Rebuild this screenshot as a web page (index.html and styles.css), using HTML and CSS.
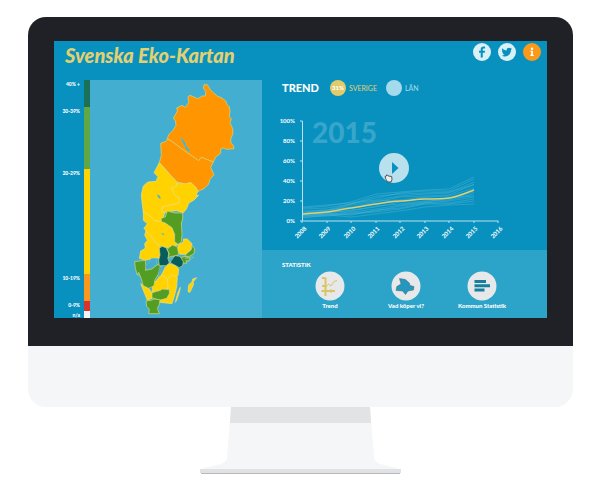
FILE: index.html
```
<!DOCTYPE html>
<html lang="sv">
<head>
<meta charset="utf-8">
<title>Svenska Eko-Kartan</title>
<link rel="stylesheet" href="styles.css">
</head>
<body>
<div class="computer">
  <div class="monitor">
    <main class="screen">
      <header class="topbar">
        <h1 class="brand">Svenska Eko-Kartan</h1>
        <nav class="social">
          <a class="social-link" href="#" aria-label="Facebook"><svg viewBox="0 0 18 18"><path d="M9.8 14.5V9.8h2l.3-2H9.8V6.6c0-.7.3-1 1-1h1.3V3.7c-2.8-.4-4.4.5-4.4 2.6v1.5H6v2h1.7v4.7z"/></svg></a>
          <a class="social-link" href="#" aria-label="Twitter"><svg viewBox="0 0 18 18"><path d="M14 5.8l-1 1.1c0 4-3.2 6.8-6.5 6.5-1 0-2-.3-2.700-.9 1.100.1 2-.2 2.800-.8-.9 0-1.700-.6-2-1.400h.9C4.500 10 4 9 3.900 8.100l.9.2C3.900 7.500 3.700 6.300 4.200 5.300c1.200 1.400 2.600 2.100 4.500 2.200C8.300 5.900 9.500 4.700 10.900 4.700c.6 0 1.100.2 1.500.6l1.300-.5-.7 1.100z"/></svg></a>
          <a class="social-link info" href="#" aria-label="Info"><svg viewBox="0 0 18 18"><circle cx="9" cy="5.700" r="1.200"/><path d="M7.500 7.700h2.400v4h.8v1.200H7.400v-1.200h.7V8.900h-.6z"/></svg></a>
        </nav>
      </header>

      <ul class="scale">
        <li class="step dark"><span>40% +</span></li>
        <li class="step green"><span>30-39%</span></li>
        <li class="step yellow"><span>20-29%</span></li>
        <li class="step orange"><span>10-19%</span></li>
        <li class="step red"><span>0-9%</span></li>
        <li class="step white"><span>n/a</span></li>
      </ul>

      <section class="map" aria-label="Karta">
        <svg viewBox="-120 6 516 714">
          <g class="o">
            <path d="M222 20L232 20 240 34 250 44 262 54 276 60 288 70 291 80 298 86 300 100 298 116 304 122 300 134 308 152 309 166 302 184 303 196 310 202 312 212 290 214 280 210 272 214 272 226 258 236 250 252 214 238 206 248 186 234 166 220 144 204 128 192 112 182 116 170 128 158 138 142 136 128 130 120 142 100 140 90 156 82 166 88 176 74 174 56 180 52 204 62 216 54 226 54 227 40 220 30Z"/>
            <path d="M112 182L128 192 144 204 166 220 206 248 214 238 250 252 242 268 252 290 240 304 236 318 222 332 204 340 196 326 182 314 166 318 142 312 120 290 104 270 88 254 94 232 92 196 108 190Z"/>
          </g>
          <g class="y">
            <path d="M88 254L120 290 142 314 140 324 124 330 134 350 150 362 146 376 98 386 94 400 104 404 100 420 94 434 74 428 60 414 40 404 36 372 34 350 40 324 54 312 78 310 84 296 72 284Z"/>
            <path d="M142 314L166 318 182 314 196 326 204 340 198 352 206 352 192 366 176 376 170 392 160 404 140 398 120 400 104 404 94 400 98 386 146 376 150 362 134 350 124 330 140 324Z"/>
            <path d="M40 401L60 414 74 428 94 431 106 435 126 449 134 471 134 491 144 501 122 505 114 509 98 505 88 503 76 493 62 473 48 459 42 451 52 437 40 427Z"/>
            <path d="M48 459L62 473 76 493 90 505 88 541 76 539 62 543 46 547 28 541 32 519 46 511 44 497 52 487 44 471Z"/>
            <path d="M146 499L160 493 160 483 172 483 186 497 182 515 168 529 150 529 142 515Z"/>
            <path d="M118 557L136 563 146 573 144 593 136 597 126 591 112 603 94 591 106 567Z"/>
            <path d="M94 591L112 603 116 613 114 633 92 637 74 641 66 643 68 621 84 601Z"/>
            <path d="M112 603L126 591 142 597 140 627 134 651 126 677 88 673 92 663 112 661 120 639 114 631Z"/>
            <path d="M32 617L40 623 56 631 66 645 66 661 52 667 44 647Z"/>
            <path d="M200 599L188 603 186 611 176 621 174 641 180 643 190 621 190 611Z"/>
            <path d="M151 628L143 645 136 673 140 667 148 643Z"/>
          </g>
          <g class="g">
            <path d="M112 399L134 405 158 405 158 423 154 435 156 469 154 491 144 499 134 491 134 469 126 449 106 435 94 431 94 421 106 417Z"/>
            <path d="M116 509L128 501 142 507 146 529 138 533 124 535 114 539 118 527 112 515Z"/>
            <path d="M186 503L194 513 192 527 178 535 164 535 170 527 184 515Z"/>
            <path d="M152 538L164 536 180 540 176 550 168 548 170 556 160 555 154 548Z"/>
            <path d="M14 551L30 549 46 547 48 567 46 577 66 573 84 559 92 567 86 587 74 607 72 623 56 631 40 623 32 597 26 583 22 591 16 571Z"/>
            <path d="M66 645L76 641 92 637 96 633 118 635 118 647 110 661 88 667 66 659Z"/>
            <path d="M48 669L64 667 72 663 90 665 88 679 82 691 88 707 56 707 58 693 50 685Z"/>
          </g>
          <g class="d">
            <path d="M96 505L108 509 116 525 114 541 118 555 108 563 88 563 86 547 90 531 88 511Z"/>
            <path d="M122 545L136 533 150 535 160 551 158 563 148 569 134 561 122 555Z"/>
          </g>
          <path class="lake" d="M64 541L78 541 80 557 66 571 50 575 46 563 56 555Z M88 569L96 565 90 589 84 597Z M112 541L130 541 122 551Z M93 466L103 467 100 472Z M150 179L158 184 166 194 170 206 180 218 178 223 168 214 162 200Z M80 349L90 354 92 363 86 360Z"/>
          <path class="isle" d="M166 542l18-5M172 548l12-4M184 537l8 2M24 585l4 12"/>
        </svg>
      </section>

      <section class="trend">
        <div class="trend-head">
          <h2 class="trend-title">TREND</h2>
          <span class="key sweden"><b class="dot">31%</b>SVERIGE</span>
          <span class="key county"><b class="dot"></b>LÄN</span>
        </div>
        <div class="chart">
          <svg viewBox="262 96 285 154">
            <text class="year" x="312" y="143">2015</text>
            <g class="counties">
              <path d="M303 208L327 206 351 202 376 194 400 192 425 190 449 189 474 177"/>
              <path d="M303 209L327 208 351 204 376 198 400 193 425 191 449 191 474 179"/>
              <path d="M303 207L327 205 351 203 376 200 400 196 425 194 449 193 474 182"/>
              <path d="M303 211L327 210 351 204 376 196 400 194 425 193 449 192 474 185"/>
              <path d="M303 212L327 210 351 207 376 202 400 197 425 196 449 195 474 184"/>
              <path d="M303 213L327 211 351 205 376 201 400 200 425 197 449 196 474 188"/>
              <path d="M303 214L327 213 351 210 376 207 400 202 425 198 449 199 474 192"/>
              <path d="M303 215L327 212 351 211 376 206 400 204 425 201 449 200 474 194"/>
              <path d="M303 215L327 214 351 212 376 209 400 205 425 202 449 198 474 196"/>
              <path d="M303 216L327 215 351 213 376 211 400 206 425 203 449 201 474 197"/>
              <path d="M303 216L327 214 351 215 376 210 400 208 425 203 449 203 474 199"/>
              <path d="M303 217L327 216 351 214 376 212 400 209 425 204 449 204 474 201"/>
              <path d="M303 218L327 215 351 217 376 214 400 211 425 207 449 205 474 204"/>
            </g>
            <path class="national" d="M303 214C311 213 319 213 327 212S343 209 351 208 368 205 376 204 392 201 400 201 417 199 425 199 441 199 449 198 466 193 474 190"/>
            <path class="axis" d="M300 121H302.500V221H498.500M300 141H302M300 161H302M300 181H302M300 201H302M300 221H302V223M327 221V223M351 221V223M376 221V223M400 221V223M425 221V223M449 221V223M474 221V223M498 221V223"/>
            <g class="labels">
              <text x="295" y="123">100%</text><text x="295" y="143">80%</text><text x="295" y="163">60%</text><text x="295" y="183">40%</text><text x="295" y="203">20%</text><text x="295" y="223">0%</text>
              <text transform="translate(307 229) rotate(-45)">2008</text><text transform="translate(331 229) rotate(-45)">2009</text><text transform="translate(356 229) rotate(-45)">2010</text><text transform="translate(380 229) rotate(-45)">2011</text><text transform="translate(405 229) rotate(-45)">2012</text><text transform="translate(429 229) rotate(-45)">2013</text><text transform="translate(454 229) rotate(-45)">2014</text><text transform="translate(478 229) rotate(-45)">2015</text><text transform="translate(503 229) rotate(-45)">2016</text>
            </g>
          </svg>
          <button class="play" type="button" aria-label="Spela">
            <svg viewBox="0 0 30 30"><path class="triangle" d="M13 9L19.500 15 13 21Z"/><path class="hand" d="M6 23.500l1.500-.5V22h1.200l.5 1 3.500.5.3 3-1 2.500H8.700L7 26.500z"/></svg>
          </button>
        </div>
      </section>

      <section class="stats">
        <h2 class="stats-title">STATISTIK</h2>
        <div class="stats-list">
          <button class="stat" type="button">
            <svg viewBox="0 0 30 30"><circle cx="15" cy="15" r="14.500"/><path class="gold" d="M10.500 6.500V25M6.500 20H20M7 7h3M7 15h3M16 18.500v3"/><path class="gold thin" d="M11 16L13.500 13 16 15 19 10.500 22 9.500"/></svg>
            Trend
          </button>
          <button class="stat" type="button">
            <svg viewBox="0 0 30 30"><circle cx="15" cy="15" r="14.500"/><path class="shape" d="M8.500 7.500L14.500 8.500 18.400 12 19 14.500 23 15.500 22.500 19 17 20 14.500 23.500 11.600 20 5 19.500 5.800 15.500 10 13Z"/></svg>
            Vad köper vi?
          </button>
          <button class="stat" type="button">
            <svg viewBox="0 0 30 30"><circle cx="15" cy="15" r="14.500"/><path class="bars" d="M7.500 10.500H19M7.500 14.750H23M7.500 19H17.500"/></svg>
            Kommun Statistik
          </button>
        </div>
      </section>
    </main>
  </div>
  <div class="stand">
    <svg viewBox="0 0 202 68"><path class="neck" d="M31 0H170L174 50Q174 55 180 57L201 62H0L21 57Q27 55 27 50Z"/><path class="shade" d="M31 0H170L171 16H30Z"/><path class="foot" d="M0 62H201V66H0Z"/><path class="edge" d="M1 66.500H200"/></svg>
  </div>
</div>
</body>
</html>
```
FILE: styles.css
```
* { box-sizing: border-box; }

body {
  margin: 0;
  background: #fff;
  font-family: Lato, "Liberation Sans", sans-serif;
  color: #fff;
}

h1, h2, ul { margin: 0; padding: 0; }
button { border: 0; padding: 0; background: none; font: inherit; color: inherit; cursor: pointer; }
svg { display: block; }

.computer { padding: 17px 27px 0 28px; }

.monitor {
  padding: 24px 26px 28px;
  background: #202126;
  border-bottom: 61px solid #f5f6f8;
  border-radius: 18px;
}

.screen {
  display: grid;
  grid-template-columns: 36px 172fr 285fr;
  grid-template-rows: 39px auto 68px;
  background: #0891be;
}

.topbar {
  grid-column: 1 / -1;
  display: flex;
  justify-content: space-between;
  align-items: flex-start;
  padding: 2px 6px 0 11px;
}
.brand {
  font-size: 20px;
  line-height: 24px;
  font-weight: 900;
  font-style: italic;
  color: #e2d072;
}
.social { display: flex; gap: 7px; }
.social-link {
  width: 18px;
  height: 18px;
  border-radius: 50%;
  background: #d9f0f7;
  fill: #0891be;
}
.info { background: #fb9a19; fill: #fff; }

.scale {
  grid-row: 2 / 4;
  display: grid;
  grid-template-rows: 27fr 62fr 105fr 27fr 10fr 7fr;
  list-style: none;
  font-size: 5px;
  line-height: 6px;
  font-weight: 900;
}
.step {
  padding: 1px 4px 0 0;
  border-right: 6px solid;
  text-align: right;
}
.step span { display: block; color: #fff; }
.dark { border-color: #1b7058; }
.green { border-color: #61a744; }
.yellow { border-color: #ffd400; }
.orange { border-color: #f9981d; }
.red { border-color: #da322c; }
.white { border-color: #f4f4f6; }

.map { grid-row: 2 / 4; background: #44aed1; }
.map svg { width: 100%; }
.map path { stroke: #d9d977; stroke-width: 2; stroke-linejoin: round; }
.o { fill: #ff9500; }
.y { fill: #ffd200; }
.map .y path { stroke: #f5e078; }
.g { fill: #539d23; }
.d { fill: #075d5b; }
.map .lake { fill: #44aed1; stroke: #9ccb9b; stroke-width: 1; }
.map .isle { fill: none; stroke: #8fc491; stroke-width: 3; }

.trend-head { display: flex; align-items: center; padding-left: 20px; }
.trend-title { width: 48px; font-size: 11px; line-height: 16px; font-weight: 900; }
.key { display: flex; align-items: center; gap: 3px; margin-right: 9px; font-size: 7px; }
.dot {
  width: 16px;
  height: 16px;
  border-radius: 50%;
  font-size: 6px;
  line-height: 16px;
  font-weight: 900;
  text-align: center;
  color: #fff;
}
.sweden { color: #e2d072; }
.sweden .dot { background: #e2cb6b; }
.county { color: #a3dbec; }
.county .dot { background: #a3dbec; }

.chart { position: relative; }
.chart svg { width: 100%; }
.year { font-size: 28px; font-weight: 900; fill: #38a5cb; }
.counties { fill: none; stroke: #5bbcda; stroke-opacity: .4; stroke-linejoin: round; }
.national { fill: none; stroke: #e2d072; stroke-width: 1.5; }
.axis { fill: none; stroke: #b9e1ef; }
.labels { font-size: 6px; font-weight: 700; fill: #fff; text-anchor: end; }

.play {
  position: absolute;
  left: 41%;
  top: 37%;
  width: 30px;
  height: 30px;
  border-radius: 50%;
  background: #b9e0ed;
}
.triangle { fill: #0891be; }
.hand { fill: #eee; stroke: #555; stroke-width: 1; }

.stats { padding: 11px 27px 0 20px; background: #2ca3c8; }
.stats-title { font-size: 6px; line-height: 8px; font-weight: 900; }
.stats-list { display: grid; grid-template-columns: repeat(3, 1fr); padding: 2px 0 0 10px; }
.stat {
  display: flex;
  flex-direction: column;
  align-items: center;
  font-size: 6px;
  line-height: 10px;
  font-weight: 900;
  white-space: nowrap;
}
.stat svg { width: 30px; height: 30px; fill: none; }
.stat circle { fill: #e6e8ea; }
.gold { stroke: #d9c566; stroke-width: 2; }
.stat .thin { stroke-width: 1; }
.stat .shape { fill: #2397bd; stroke: #52666f; stroke-width: .5; }
.bars { stroke: #177f9d; stroke-width: 3; }

.stand { display: flex; justify-content: center; }
.stand svg { width: 202px; }
.neck { fill: #f5f6f8; }
.shade { fill: #e2e3e4; }
.foot { fill: #e0e2e3; }
.edge { stroke: #b9b9bd; }
```
